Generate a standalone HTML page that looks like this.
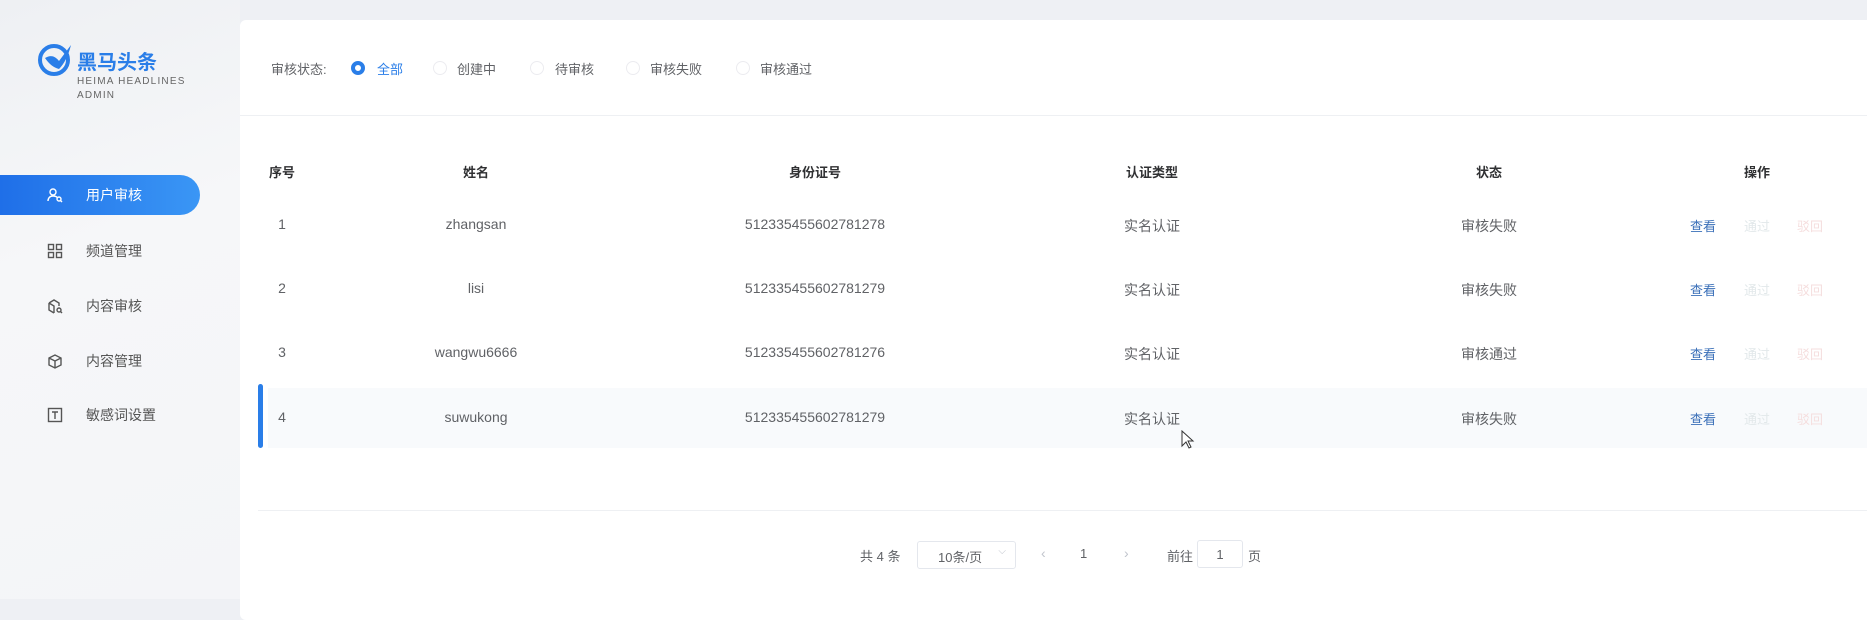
<!DOCTYPE html>
<html><head><meta charset="utf-8"><style>
*{margin:0;padding:0;box-sizing:border-box}
body{width:1867px;height:599px;overflow:hidden;background:#eef0f4;font-family:"Liberation Sans","Noto Sans CJK SC",sans-serif;position:relative;color:#606266}
.side{position:absolute;left:0;top:0;width:240px;height:599px;background:linear-gradient(160deg,#eef0f3 0%,#f6f7f9 40%,#f4f5f8 100%)}
.abs{position:absolute;white-space:nowrap}
.menu{position:absolute;left:0;width:200px;height:40px;font-size:14px;color:#555}
.menu .ic{position:absolute;left:47px;top:12px;width:16px;height:16px}
.menu span{position:absolute;left:86px;top:10px}
.active{background:linear-gradient(90deg,#1f6fe8,#3a96f5);border-radius:0 20px 20px 0;color:#fff}
.card{position:absolute;left:240px;top:20px;width:1640px;height:600px;background:#fff;border-radius:6px}
.t{position:absolute;font-size:14px;color:#606266;white-space:nowrap;transform:translateX(-50%)}
.h{font-weight:bold;color:#303133}
.radio{position:absolute;width:14px;height:14px;border-radius:50%;border:1px solid #ececf0}
.f{position:absolute;font-size:14px;color:#606266;white-space:nowrap}
</style></head><body>
<div class="side">
  <svg class="abs" style="left:37px;top:41px" width="38" height="36" viewBox="0 0 38 36">
    <circle cx="17" cy="19" r="14" fill="none" stroke="#2a7ee8" stroke-width="4"/>
    <path d="M8 17 Q16 12 22 20 L34 4 Q30 20 22 28 Q14 26 8 17Z" fill="#2a7ee8"/>
  </svg>
  <div class="abs" style="left:77px;top:46px;font-size:20px;font-weight:bold;color:#2a7ee8">黑马头条</div>
  <div class="abs" style="left:77px;top:75px;font-size:10px;color:#666;letter-spacing:1.2px;line-height:14px">HEIMA HEADLINES<br>ADMIN</div>

  <div class="menu active" style="top:175px">
    <svg class="ic" viewBox="0 0 16 16" fill="none" stroke="#fff" stroke-width="1.4"><circle cx="6" cy="5" r="3"/><path d="M1 14c0-3 2-5 5-5s4 1 4.5 2"/><circle cx="12" cy="12" r="2"/><path d="M13.5 13.5l1.5 1.5"/></svg>
    <span>用户审核</span></div>
  <div class="menu" style="top:231px">
    <svg class="ic" viewBox="0 0 16 16" fill="none" stroke="#555" stroke-width="1.4"><rect x="1.5" y="1.5" width="5" height="5"/><rect x="9.5" y="1.5" width="5" height="5"/><rect x="1.5" y="9.5" width="5" height="5"/><rect x="9.5" y="9.5" width="5" height="5"/></svg>
    <span>频道管理</span></div>
  <div class="menu" style="top:286px">
    <svg class="ic" viewBox="0 0 16 16" fill="none" stroke="#555" stroke-width="1.4"><path d="M2 5l5-3 5 3v3M2 5v7l5 3M2 5l5 3v7"/><circle cx="12" cy="12" r="2"/><path d="M13.5 13.5l1.5 1.5"/></svg>
    <span>内容审核</span></div>
  <div class="menu" style="top:341px">
    <svg class="ic" viewBox="0 0 16 16" fill="none" stroke="#555" stroke-width="1.4"><path d="M2 5l6-3 6 3v7l-6 3-6-3z M2 5l6 3 6-3 M8 8v7"/></svg>
    <span>内容管理</span></div>
  <div class="menu" style="top:395px">
    <svg class="ic" viewBox="0 0 16 16" fill="none" stroke="#555" stroke-width="1.4"><rect x="1.5" y="1.5" width="13" height="13"/><path d="M5 5h6M8 5v7"/></svg>
    <span>敏感词设置</span></div>
</div>

<div class="card"></div>
<div class="f" style="left:271px;top:59px;font-size:13px">审核状态:</div>
<div class="radio" style="left:351px;top:61px;border:4px solid #2a7ee8"></div>
<div class="f" style="left:377px;top:59px;color:#2a7ee8;font-size:13px">全部</div>
<div class="radio" style="left:433px;top:61px"></div><div class="f" style="left:457px;top:59px;font-size:13px">创建中</div>
<div class="radio" style="left:530px;top:61px"></div><div class="f" style="left:555px;top:59px;font-size:13px">待审核</div>
<div class="radio" style="left:626px;top:61px"></div><div class="f" style="left:650px;top:59px;font-size:13px">审核失败</div>
<div class="radio" style="left:736px;top:61px"></div><div class="f" style="left:760px;top:59px;font-size:13px">审核通过</div>
<div class="abs" style="left:240px;top:115px;width:1627px;height:1px;background:#eef0f3"></div>

<div class="abs" style="left:268px;top:388px;width:1599px;height:60px;background:#f8fafc"></div>
<div class="abs" style="left:258px;top:384px;width:5px;height:64px;background:#2a7ee8;border-radius:3px"></div>

<div class="t h" style="left:282px;top:162px;font-size:13px">序号</div>
<div class="t h" style="left:476px;top:162px;font-size:13px">姓名</div>
<div class="t h" style="left:815px;top:162px;font-size:13px">身份证号</div>
<div class="t h" style="left:1152px;top:162px;font-size:13px">认证类型</div>
<div class="t h" style="left:1489px;top:162px;font-size:13px">状态</div>
<div class="t h" style="left:1757px;top:162px;font-size:13px">操作</div>

<div class="t" style="left:282px;top:216px">1</div><div class="t" style="left:476px;top:216px">zhangsan</div><div class="t" style="left:815px;top:216px">512335455602781278</div><div class="t" style="left:1152px;top:216px">实名认证</div><div class="t" style="left:1489px;top:216px">审核失败</div>
<div class="t" style="left:282px;top:280px">2</div><div class="t" style="left:476px;top:280px">lisi</div><div class="t" style="left:815px;top:280px">512335455602781279</div><div class="t" style="left:1152px;top:280px">实名认证</div><div class="t" style="left:1489px;top:280px">审核失败</div>
<div class="t" style="left:282px;top:344px">3</div><div class="t" style="left:476px;top:344px">wangwu6666</div><div class="t" style="left:815px;top:344px">512335455602781276</div><div class="t" style="left:1152px;top:344px">实名认证</div><div class="t" style="left:1489px;top:344px">审核通过</div>
<div class="t" style="left:282px;top:409px">4</div><div class="t" style="left:476px;top:409px">suwukong</div><div class="t" style="left:815px;top:409px">512335455602781279</div><div class="t" style="left:1152px;top:409px">实名认证</div><div class="t" style="left:1489px;top:409px">审核失败</div>

<div class="t" style="left:1703px;top:216px;color:#3a6fb8;font-size:13px">查看</div><div class="t" style="left:1757px;top:216px;color:#e2e8ea;font-size:13px">通过</div><div class="t" style="left:1810px;top:216px;color:#f5dede;font-size:13px">驳回</div>
<div class="t" style="left:1703px;top:280px;color:#3a6fb8;font-size:13px">查看</div><div class="t" style="left:1757px;top:280px;color:#e2e8ea;font-size:13px">通过</div><div class="t" style="left:1810px;top:280px;color:#f5dede;font-size:13px">驳回</div>
<div class="t" style="left:1703px;top:344px;color:#3a6fb8;font-size:13px">查看</div><div class="t" style="left:1757px;top:344px;color:#e2e8ea;font-size:13px">通过</div><div class="t" style="left:1810px;top:344px;color:#f5dede;font-size:13px">驳回</div>
<div class="t" style="left:1703px;top:409px;color:#3a6fb8;font-size:13px">查看</div><div class="t" style="left:1757px;top:409px;color:#e2e8ea;font-size:13px">通过</div><div class="t" style="left:1810px;top:409px;color:#f5dede;font-size:13px">驳回</div>

<svg class="abs" style="left:1181px;top:430px" width="14" height="20" viewBox="0 0 14 20"><path d="M1 1v15l4-4 3 6 2-1-3-6h5z" fill="#fff" stroke="#333" stroke-width="1"/></svg>

<div class="abs" style="left:258px;top:510px;width:1609px;height:1px;background:#eef0f3"></div>

<div class="f" style="left:860px;top:546px;font-size:13px">共 4 条</div>
<div class="abs" style="left:917px;top:541px;width:99px;height:28px;border:1px solid #e4e7ed;border-radius:3px;font-size:13px;color:#606266;padding:5px 0 0 20px">10条/页<span style="position:absolute;right:9px;top:4px;color:#c0c4cc;font-size:10px">⌵</span></div>
<div class="f" style="left:1041px;top:545px;color:#c0c4cc">‹</div>
<div class="f" style="left:1080px;top:546px;font-size:13px">1</div>
<div class="f" style="left:1124px;top:545px;color:#c0c4cc">›</div>
<div class="f" style="left:1167px;top:546px;font-size:13px">前往</div>
<div class="abs" style="left:1197px;top:540px;width:46px;height:28px;border:1px solid #e4e7ed;border-radius:3px;font-size:13px;text-align:center;padding-top:6px">1</div>
<div class="f" style="left:1248px;top:546px;font-size:13px">页</div>
</body></html>
